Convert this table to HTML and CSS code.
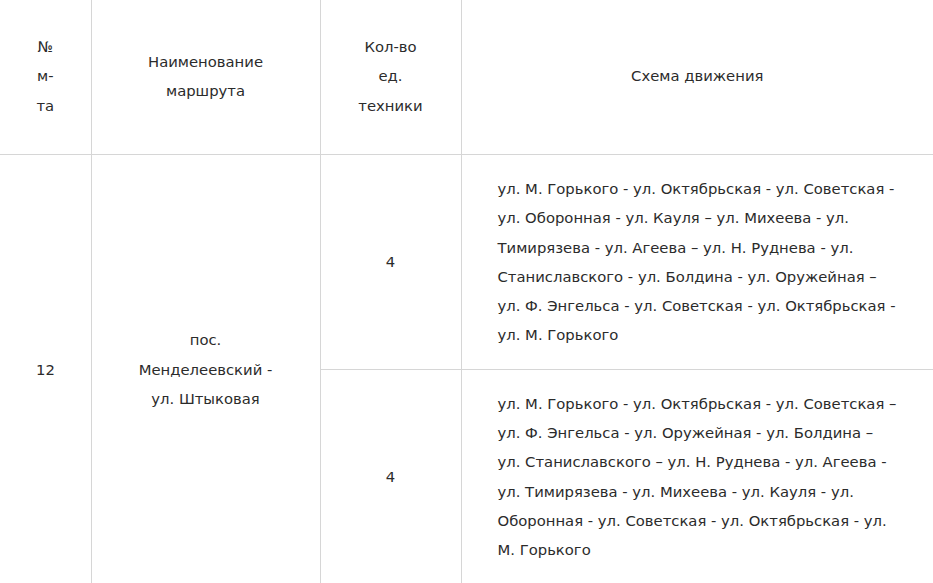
FILE: index.html
```html
<!DOCTYPE html>
<html lang="ru">
<head>
<meta charset="utf-8">
<title>Маршруты</title>
<link rel="stylesheet" href="styles.css">
</head>
<body>
<table class="routes">
  <colgroup>
    <col class="c-num">
    <col class="c-name">
    <col class="c-qty">
    <col class="c-scheme">
  </colgroup>
  <thead>
    <tr>
      <th class="first">№ м-та</th>
      <th>Наименование маршрута</th>
      <th>Кол-во ед. техники</th>
      <th>Схема движения</th>
    </tr>
  </thead>
  <tbody>
    <tr>
      <td class="first" rowspan="2">12</td>
      <td rowspan="2">пос. Менделеевский - ул. Штыковая</td>
      <td>4</td>
      <td class="scheme">ул. М. Горького - ул. Октябрьская - ул. Советская - ул. Оборонная - ул. Кауля – ул. Михеева - ул. Тимирязева - ул. Агеева – ул. Н. Руднева - ул. Станиславского - ул. Болдина - ул. Оружейная – ул. Ф. Энгельса - ул. Советская - ул. Октябрьская - ул. М. Горького</td>
    </tr>
    <tr>
      <td>4</td>
      <td class="scheme">ул. М. Горького - ул. Октябрьская - ул. Советская – ул. Ф. Энгельса - ул. Оружейная - ул. Болдина – ул. Станиславского – ул. Н. Руднева - ул. Агеева - ул. Тимирязева - ул. Михеева - ул. Кауля - ул. Оборонная - ул. Советская - ул. Октябрьская - ул. М. Горького</td>
    </tr>
  </tbody>
</table>
</body>
</html>
```

FILE: styles.css
```css
html, body {
  margin: 0;
  padding: 0;
  background: #ffffff;
}

.routes {
  border-collapse: collapse;
  table-layout: fixed;
  width: 933px;
  font-family: "DejaVu Sans", sans-serif;
  font-size: 14.8px;
  line-height: 29.3px;
  color: #2b2b2b;
}

.c-num { width: 91px; }
.c-name { width: 229px; }
.c-qty { width: 141px; }
.c-scheme { width: 472px; }

.routes th,
.routes td {
  font-weight: normal;
  text-align: center;
  vertical-align: middle;
  padding: 19px 36px;
  border-left: 1px solid #d6d6d6;
  border-bottom: 1px solid #d6d6d6;
}

.routes th {
  height: 116px;
  padding-top: 18px;
  padding-bottom: 20px;
}

.routes .first {
  border-left: none;
}

.routes td.scheme {
  text-align: left;
}
```
